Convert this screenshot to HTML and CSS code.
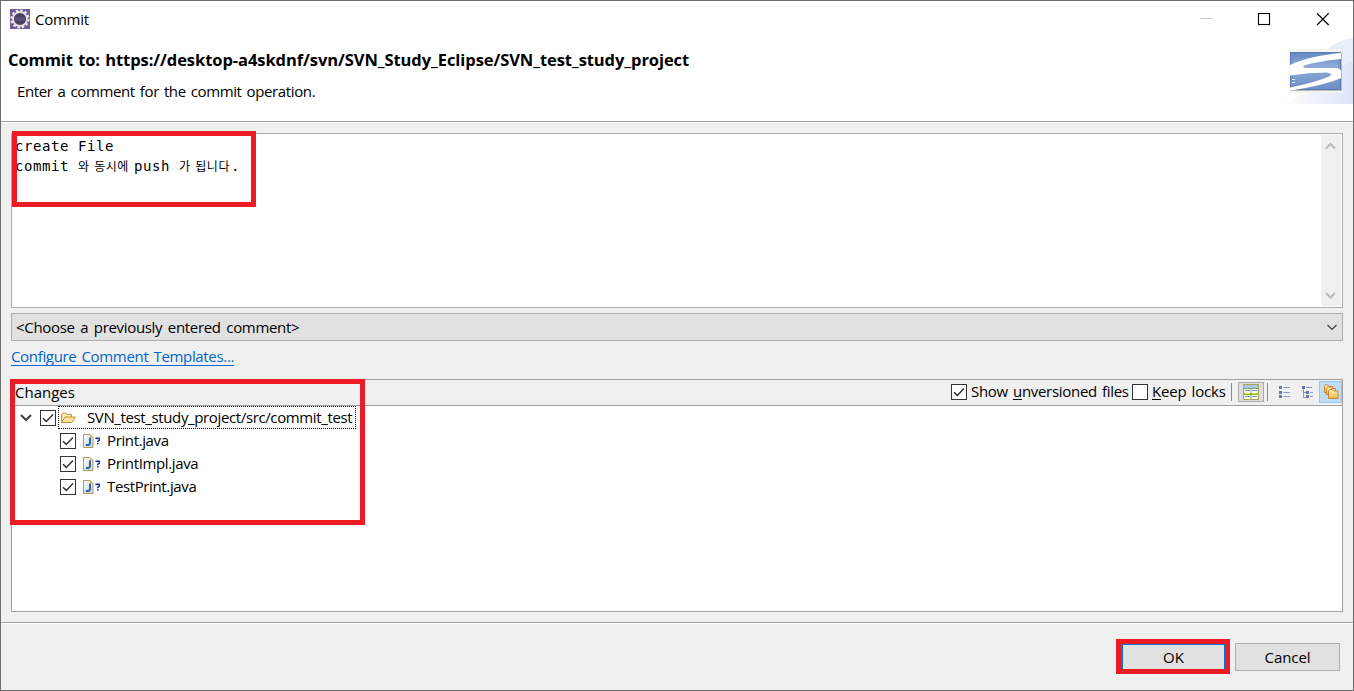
FILE: index.html
```html
<!DOCTYPE html>
<html lang="en">
<head>
<meta charset="utf-8">
<title>Commit</title>
<link rel="stylesheet" href="styles.css">
</head>
<body>
<svg width="0" height="0" class="defs">
  <defs>
    <linearGradient id="paper" x1="0" y1="0" x2="1" y2="1"><stop offset="0" stop-color="#fff"/><stop offset="1" stop-color="#b9d2ee"/></linearGradient>
    <linearGradient id="folder" x1="0" y1="0" x2="0" y2="1"><stop offset="0" stop-color="#fff3c4"/><stop offset="1" stop-color="#f2b84c"/></linearGradient>
    <linearGradient id="badge" x1="0" y1="0" x2="0" y2="1"><stop offset="0" stop-color="#6288c2"/><stop offset=".35" stop-color="#8eaad6"/><stop offset="1" stop-color="#7091c8"/></linearGradient>
    <linearGradient id="sky" x1="0" y1="0" x2="1" y2="0"><stop offset="0" stop-color="#fff"/><stop offset="1" stop-color="#dce4f7"/></linearGradient>
    <symbol id="java" viewBox="0 0 20 16">
      <path d="M2.5 1.5H9L12 4.5V14.5H2.5Z" fill="url(#paper)" stroke="#b39850"/>
      <path d="M9 1.5V4.5H12Z" fill="#d9b65f"/>
      <path d="M9 4.5V9.5Q9 12 6.8 12H4.8" fill="none" stroke="#2a6294" stroke-width="1.9"/>
      <path d="M15.2 6.2V5.3H18.2V7.4L16.7 8.4V9.2M16.7 10.1V11.5" fill="none" stroke="#1c2f95" stroke-width="1.5"/>
    </symbol>
    <symbol id="tick" viewBox="0 0 16 16"><path d="M3 8.2L6.3 11.4L13 4.4" fill="none" stroke="#333" stroke-width="1.5"/></symbol>
  </defs>
</svg>
<div class="window">
  <header class="banner">
    <div class="titlebar">
      <svg class="app-icon" width="20" height="20" viewBox="0 0 20 20">
        <rect width="20" height="20" fill="#6e5c99"/>
        <circle cx="10" cy="10" r="8.5" fill="none" stroke="#f1eee6" stroke-width="2.2" stroke-dasharray="2.5 1.95"/>
        <circle cx="10" cy="10" r="7" fill="#47405f" stroke="#e5e1dc" stroke-width="1.8"/>
        <path d="M4.5 9H15.5M4.5 11H15.5" stroke="#67608a"/>
      </svg>
      <span class="title">Commit</span>
      <svg class="controls" width="130" height="14" viewBox="0 0 130 14" fill="none">
        <path d="M0 5.5H12" stroke="#ccc"/>
        <rect x="58.5" y=".5" width="11" height="11" stroke="#000" stroke-width="1.1"/>
        <path d="M117 .3L128.7 12M128.7 .3L117 12" stroke="#000" stroke-width="1.2"/>
      </svg>
    </div>
    <h1 class="heading">Commit to: https://desktop-a4skdnf/svn/SVN_Study_Eclipse/SVN_test_study_project</h1>
    <p class="message">Enter a comment for the commit operation.</p>
    <svg class="logo" width="74" height="66" viewBox="0 0 74 66">
      <path d="M0 66Q45 54 60 10L74 0V66Z" fill="url(#sky)"/>
      <path d="M48 12Q58 2 74 0V24Q62 26 52 42V12Z" fill="#e8edfa"/>
      <rect x="10" y="11" width="53" height="44" fill="#f5f4ee"/>
      <rect x="12" y="15" width="51" height="38" fill="#b6b9bd"/>
      <rect x="11.500" y="14.500" width="50" height="37" fill="url(#badge)" stroke="#5d7eb4"/>
      <path d="M13.500 16V50H60V16" fill="none" stroke="#6e8ec2"/>
      <path d="M62 15Q30 18 11 27V37.500Q30 34.500 48 34.500Q55 35.500 50 38.500Q38 44 11 49.500V52H15Q44 47.500 62 40.300V33Q61 30.200 57 30H28Q22.500 29.500 25 27.500Q38 23.500 62 21Z" fill="#fff"/>
      <path d="M13 41.500H16M13 44.500H16" stroke="#dce6f7"/>
    </svg>
  </header>

  <main class="content">
    <div class="comment">
      <div class="comment-text"><div>create File</div><div>commit <span class="ko k1">와 동시에</span>push <span class="ko k2">가 됩니다</span>.</div></div>
      <div class="scrollbar">
        <svg width="12" height="8" viewBox="0 0 12 8"><path d="M1 6.500L5.500 2L10 6.500" fill="none" stroke="#b9b9b9" stroke-width="2"/></svg>
        <svg width="12" height="8" viewBox="0 0 12 8"><path d="M1 1L5.500 5.500L10 1" fill="none" stroke="#b9b9b9" stroke-width="2"/></svg>
      </div>
      <div class="mark mark-comment"></div>
    </div>
    <div class="combo">
      <span class="combo-text">&lt;Choose a previously entered comment&gt;</span>
      <svg width="10" height="7" viewBox="0 0 10 7"><path d="M.5 1L5 5.500L9.500 1" fill="none" stroke="#404040" stroke-width="1.200"/></svg>
    </div>
    <a class="link">Configure Comment Templates...</a>

    <section class="changes">
      <div class="toolbar">
        <span class="label-changes">Changes</span>
        <span class="box"><svg width="16" height="16"><use href="#tick"/></svg></span>
        <span class="label-show">Show <u>u</u>nversioned files</span>
        <span class="box"></span>
        <span class="label-keep"><u>K</u>eep locks</span>
        <i class="separator"></i>
        <span class="tool tool-on">
          <svg width="16" height="16" viewBox="0 0 16 16">
            <rect x=".5" y=".5" width="15" height="15" fill="#fdfde9" stroke="#a9a55f"/>
            <path d="M1 2.500H15" stroke="#a9c9dc" stroke-width="3"/>
            <path d="M1 4.500H15M8 5V15" stroke="#8d9b78"/>
            <path d="M2 6.500H7M9 6.500H14M2 12.500H7M9 12.500H14" stroke="#6c9bc0"/>
            <rect x="1" y="9" width="14" height="2" fill="#94b62b"/>
            <path d="M2 9.500H7M9 9.500H14" stroke="#cbdf5c"/>
          </svg>
        </span>
        <i class="separator separator-2"></i>
        <svg class="flat-icon" width="16" height="16" viewBox="0 0 16 16">
          <path d="M2 3.500H5M2 8.500H5M2 12.500H5" stroke="#6578a9" stroke-width="3"/>
          <path d="M6.500 3.500H13M6.500 8.500H13M6.500 12.500H13" stroke="#8999bf"/>
        </svg>
        <svg class="tree-icon" width="16" height="16" viewBox="0 0 16 16">
          <path d="M3.500 4V13.500H7M3.500 8.500H7" fill="none" stroke="#8999bf"/>
          <path d="M2 3.500H5M6 8.500H9M6 12.500H9" stroke="#6578a9" stroke-width="3"/>
          <path d="M6 3.500H12M10 8.500H13M10 12.500H13" stroke="#8999bf"/>
        </svg>
        <span class="tool-selected">
          <svg width="16" height="16" viewBox="0 0 16 16" fill="url(#folder)" stroke="#c98432">
            <path d="M1.500 8.500V2.500L2.500 1H5L6.500 2.500H9.500V8.500Z"/>
            <path d="M3.500 10.500V4.500L4.500 3H7L8.500 4.500H12.500V10.500Z"/>
            <path d="M5.500 14.500V7L6.500 5.500H9L10.500 7H15V14.500Z"/>
          </svg>
        </span>
      </div>
      <div class="tree">
        <div class="row row-root">
          <svg class="twisty" width="12" height="8" viewBox="0 0 12 8"><path d="M1 1L6 6L11 1" fill="none" stroke="#404040" stroke-width="2"/></svg>
          <span class="box"><svg width="16" height="16"><use href="#tick"/></svg></span>
          <span class="focus">
            <svg width="16" height="16" viewBox="0 0 16 16"><path d="M1.500 12.500V4.500L3 3H6L7.500 4.500H11.500V7" fill="#ffe9ae" stroke="#c48e3c"/><path d="M1.500 12.500L5 7H15.500L12 12.500Z" fill="#ffe1a0" stroke="#c48e3c"/></svg>
            <span class="label-root">SVN_test_study_project/src/commit_test</span>
          </span>
        </div>
        <div class="row"><span class="box"><svg width="16" height="16"><use href="#tick"/></svg></span><svg class="file" width="20" height="16"><use href="#java"/></svg><span class="name">Print.java</span></div>
        <div class="row"><span class="box"><svg width="16" height="16"><use href="#tick"/></svg></span><svg class="file" width="20" height="16"><use href="#java"/></svg><span class="name">PrintImpl.java</span></div>
        <div class="row"><span class="box"><svg width="16" height="16"><use href="#tick"/></svg></span><svg class="file" width="20" height="16"><use href="#java"/></svg><span class="name">TestPrint.java</span></div>
      </div>
      <div class="mark mark-changes"></div>
    </section>
  </main>

  <footer class="actions">
    <div class="ok-frame"><button class="ok">OK</button></div>
    <button class="cancel">Cancel</button>
  </footer>
</div>
</body>
</html>
```
FILE: styles.css
```css
* { box-sizing: border-box; }
body { margin: 0; font: 15px/20px "Open Sans", "Noto Sans", sans-serif; color: #000; overflow: hidden; }
svg { display: block; flex: none; }
.defs { position: absolute; }
.window { width: 1354px; height: 691px; border: 1px solid #6d6d6d; background: #f0f0f0; display: flex; flex-direction: column; white-space: nowrap; }
.banner { position: relative; height: 121px; flex: none; background: #fff; border-bottom: 1px solid #a0a0a0; }
.titlebar { display: flex; height: 37px; padding: 8px 0 0 9px; }
.title { margin-left: 5px; width: 60px; letter-spacing: -.25px; }
.controls { margin: 4px 0 0 1105px; }
.heading { margin: 12px 0 0 7px; font-size: 16.5px; line-height: 20px; font-weight: 700; letter-spacing: -.07px; word-spacing: 1px; }
.message { margin: 11px 0 0 16px; line-height: 20px; letter-spacing: -.38px; word-spacing: 1.5px; }
.logo { position: absolute; right: 0; top: 37px; }

.content { height: 501px; flex: none; padding: 10px 10px 0; border-top: 1px solid #fff; border-bottom: 1px solid #a0a0a0; }
.comment { position: relative; height: 175px; border: 1px solid #abadb3; background: #fff; display: flex; justify-content: space-between; padding: 1px; }
.comment-text { padding: 1px 0 0 2px; font: 14px/20px "DejaVu Sans Mono", monospace; letter-spacing: .57px; }
.ko { display: inline-block; font: 12px/16px "Noto Sans CJK KR", sans-serif; }
.k1 { width: 56px; letter-spacing: .5px; word-spacing: 1.5px; }
.k2 { width: 52px; letter-spacing: .7px; word-spacing: 1px; }
.scrollbar { width: 20px; background: #f0f0f0; display: flex; flex-direction: column; justify-content: space-between; align-items: center; padding: 7px 0 6px; }
.mark { position: absolute; border: 5px solid #ed1c24; }
.mark-comment { left: 0; top: -3px; width: 244px; height: 76px; }
.combo { margin-top: 5px; height: 28px; border: 1px solid #adadad; background: #e1e1e1; display: flex; align-items: center; justify-content: space-between; padding: 0 5px 0 4px; }
.combo-text { letter-spacing: -.32px; word-spacing: 2px; }
.link { display: block; width: fit-content; margin-top: 6px; height: 19px; line-height: 19px; color: #0066cc; border-bottom: 1px solid #0066cc; letter-spacing: -.33px; word-spacing: 1.5px; }
.changes { position: relative; margin-top: 13px; height: 233px; border: 1px solid #a0a0a0; background: #fff; }
.toolbar { height: 26px; background: #f0f0f0; border-bottom: 1px solid #a0a0a0; display: flex; align-items: center; padding: 0 0 2px 3px; }
.toolbar u { text-underline-offset: 2px; }
.box { width: 16px; height: 16px; border: 1px solid #333; background: #fff; flex: none; display: flex; align-items: center; justify-content: center; }
.label-changes { width: 936px; flex: none; }
.label-show { width: 161px; flex: none; margin-left: 4px; padding-bottom: 2px; letter-spacing: -.3px; word-spacing: 1.5px; }
.label-keep { width: 79px; flex: none; margin-left: 4px; padding-bottom: 2px; letter-spacing: -.2px; word-spacing: 1.5px; }
.separator { width: 1px; height: 18px; background: #8c8c8c; flex: none; }
.separator-2 { margin-left: 3px; }
.tool { width: 26px; height: 20px; flex: none; margin-left: 6px; border: 1px solid #adadad; background: #dedede; display: flex; align-items: center; justify-content: center; }
.flat-icon { margin-left: 9px; }
.tree-icon { margin-left: 7px; }
.tool-selected { margin-left: 3px; width: 23px; height: 22px; flex: none; background: #c0dcf3; border: 1px solid #90c8f6; display: flex; align-items: center; justify-content: center; }
.row { height: 23px; display: flex; align-items: center; padding-left: 48px; }
.row-root { padding-left: 8px; }
.twisty { margin-right: 8px; }
.focus { margin-left: 2px; height: 23px; width: 298px; border: 1px dotted #000; display: flex; align-items: center; padding-left: 1px; }
.label-root { margin-left: 11px; padding-bottom: 2px; letter-spacing: -.37px; }
.file { margin: 0 6px 0 5px; }
.name { padding-bottom: 2px; letter-spacing: -.37px; }
.mark-changes { left: -2px; top: -1px; width: 355px; height: 146px; }

.actions { flex: 1; border-top: 1px solid #fff; display: flex; justify-content: flex-end; align-items: flex-start; padding: 15px 13px 0 0; }
button { font: inherit; padding: 0; margin: 0; background: #e1e1e1; color: #000; border: 1px solid #adadad; }
.ok-frame { width: 114px; height: 35px; border: 5px solid #ed1c24; display: flex; margin-right: 5px; }
.ok { flex: 1; border: solid #0078d7; border-width: 1px 1px 0 2px; }
.cancel { width: 105px; height: 28px; margin-top: 4px; letter-spacing: -.1px; }
```
